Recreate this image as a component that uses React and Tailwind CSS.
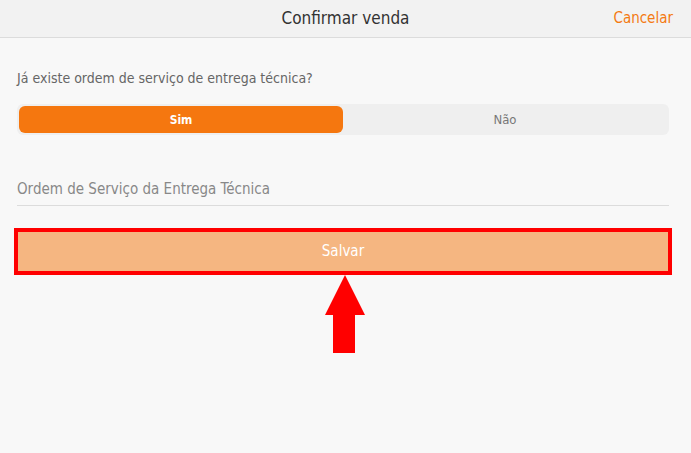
import React, { useState } from 'react'

const font = { fontFamily: '"DejaVu Sans Condensed", Roboto, sans-serif' }

const Header = () => (
  <div className="relative h-[38px] flex items-center justify-center bg-[#f2f2f2] border-b border-[#dcdcdc]">
    <h1 className="text-[17px] text-[#333]">Confirmar venda</h1>
    <button className="absolute right-[18px] top-[7px] text-[15px] text-[#f47a12]">Cancelar</button>
  </div>
)

const Segmented = ({ value, onChange }) => (
  <div className="ml-[17px] w-[652px] mt-[15px] h-[31px] p-[2px] flex rounded-md bg-[#efefef]">
    {['Sim', 'Não'].map((opt) => (
      <button
        key={opt}
        onClick={() => onChange(opt)}
        className={
          value === opt
            ? 'flex-1 rounded-md bg-[#f5770f] text-white text-[12px] font-bold'
            : 'flex-1 rounded-md text-[#777] text-[13px]'
        }
      >
        {opt}
      </button>
    ))}
  </div>
)

export default function App() {
  const [answer, setAnswer] = useState('Sim')

  return (
    <div className="w-[691px] h-[453px] bg-[#f8f8f8] overflow-hidden" style={font}>
      <Header />

      <p className="mt-[30px] ml-[17px] text-[14px] text-[#666]">Já existe ordem de serviço de entrega técnica?</p>

      <Segmented value={answer} onChange={setAnswer} />

      <div className="ml-[17px] w-[652px] mt-[42px] pb-[4px] border-b border-[#dcdcdc]">
        <span className="text-[15px] text-[#888]">Ordem de Serviço da Entrega Técnica</span>
      </div>

      <div className="relative ml-[14px] w-[658px] mt-[22px]">
        <button className="w-full h-[47px] border-4 border-[#ff0000] bg-[#f5b681] text-white text-[15px]">
          Salvar
        </button>
        <svg className="absolute left-[311px] top-[47px]" width="40" height="78" viewBox="0 0 40 78">
          <path d="M20 0 L40 40 L30 40 L30 78 L8 78 L8 40 L0 40 Z" fill="#ff0000" />
        </svg>
      </div>
    </div>
  )
}
